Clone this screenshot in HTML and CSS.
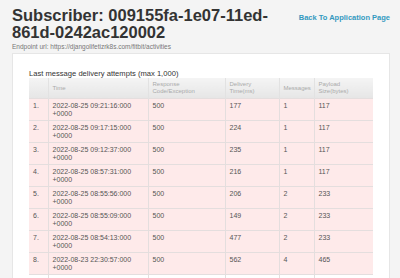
FILE: index.html
```html
<!DOCTYPE html>
<html lang="en">
<head>
    <meta charset="UTF-8">
    <meta name="viewport" content="width=device-width, initial-scale=1.0">
    <title>Subscriber</title>
    <link rel="stylesheet" href="styles.css">
</head>
<body>
    <div class="header">
        <h1 class="title">Subscriber: 009155fa-1e07-11ed-861d-0242ac120002</h1>
        <a class="back-link" href="#">Back To Application Page</a>
    </div>
    <p class="endpoint">Endpoint url: https://djangolifetizrk8s.com/fitbit/activities</p>

    <div class="card">
        <div class="caption">Last message delivery attempts (max 1,000)</div>
        <table class="attempts">
            <thead>
                <tr>
                    <th class="col-num"></th>
                    <th class="col-time">Time</th>
                    <th class="col-code">Response Code/Exception</th>
                    <th class="col-delivery">Delivery Time(ms)</th>
                    <th class="col-msgs">Messages</th>
                    <th class="col-size">Payload Size(bytes)</th>
                </tr>
            </thead>
            <tbody>
                <tr class="failed"><td>1.</td><td>2022-08-25 09:21:16:000 +0000</td><td>500</td><td>177</td><td>1</td><td>117</td></tr>
                <tr class="failed"><td>2.</td><td>2022-08-25 09:17:15:000 +0000</td><td>500</td><td>224</td><td>1</td><td>117</td></tr>
                <tr class="failed"><td>3.</td><td>2022-08-25 09:12:37:000 +0000</td><td>500</td><td>235</td><td>1</td><td>117</td></tr>
                <tr class="failed"><td>4.</td><td>2022-08-25 08:57:31:000 +0000</td><td>500</td><td>216</td><td>1</td><td>117</td></tr>
                <tr class="failed"><td>5.</td><td>2022-08-25 08:55:56:000 +0000</td><td>500</td><td>206</td><td>2</td><td>233</td></tr>
                <tr class="failed"><td>6.</td><td>2022-08-25 08:55:09:000 +0000</td><td>500</td><td>149</td><td>2</td><td>233</td></tr>
                <tr class="failed"><td>7.</td><td>2022-08-25 08:54:13:000 +0000</td><td>500</td><td>477</td><td>2</td><td>233</td></tr>
                <tr class="failed"><td>8.</td><td>2022-08-23 22:30:57:000 +0000</td><td>500</td><td>562</td><td>4</td><td>465</td></tr>
                <tr class="more"><td></td><td></td><td></td><td></td><td></td><td></td></tr>
            </tbody>
        </table>
    </div>
</body>
</html>
```

FILE: styles.css
```css
/* Global Styles */
body {
    font-family: 'Liberation Sans', Arial, sans-serif;
    background-color: #f4f4f4;
    margin: 0;
    padding: 0 10px 0 12px;
    color: #333;
}

.header {
    display: flex;
    justify-content: space-between;
    align-items: flex-start;
}

.title {
    width: 280px;
    margin: 7px 0 0;
    font-size: 16.5px;
    line-height: 17px;
    font-weight: bold;
    color: #333;
}

.back-link {
    margin-top: 13px;
    font-size: 7.5px;
    font-weight: bold;
    color: #3399c0;
    text-decoration: none;
}

.endpoint {
    margin: 2px 0 0;
    font-size: 6.5px;
    line-height: 8px;
    color: #777;
}

.card {
    margin-top: 2px;
    padding: 16px 16px 20px;
    background-color: white;
    border: 1px solid #e6e6e6;
}

.caption {
    font-size: 7.6px;
    line-height: 8px;
    color: #333;
}

.attempts {
    width: 344px;
    border-collapse: collapse;
    table-layout: fixed;
}

.attempts th {
    box-sizing: border-box;
    height: 20px;
    padding: 0 4px;
    background: linear-gradient(#f4f4f4, #e6e6e6);
    border-left: 1px solid #e2e2e2;
    font-size: 6px;
    line-height: 6.5px;
    font-weight: normal;
    color: #aaa;
    text-align: left;
    vertical-align: middle;
}

.attempts th:first-child {
    border-left: none;
}

.col-num { width: 19px; }
.col-time { width: 100px; }
.col-code { width: 77px; }
.col-delivery { width: 54px; }
.col-msgs { width: 35px; }
.col-size { width: 59px; }

.attempts td {
    padding: 3px 4px 2px;
    border: 1px solid #e4dede;
    font-size: 7px;
    line-height: 8px;
    color: #555;
    vertical-align: top;
}

.attempts td:first-child {
    border-left: none;
}

.attempts td:last-child {
    border-right: none;
}

.attempts tr.failed td {
    background-color: #feeaea;
}

.attempts tr.more td {
    height: 16px;
}
```
